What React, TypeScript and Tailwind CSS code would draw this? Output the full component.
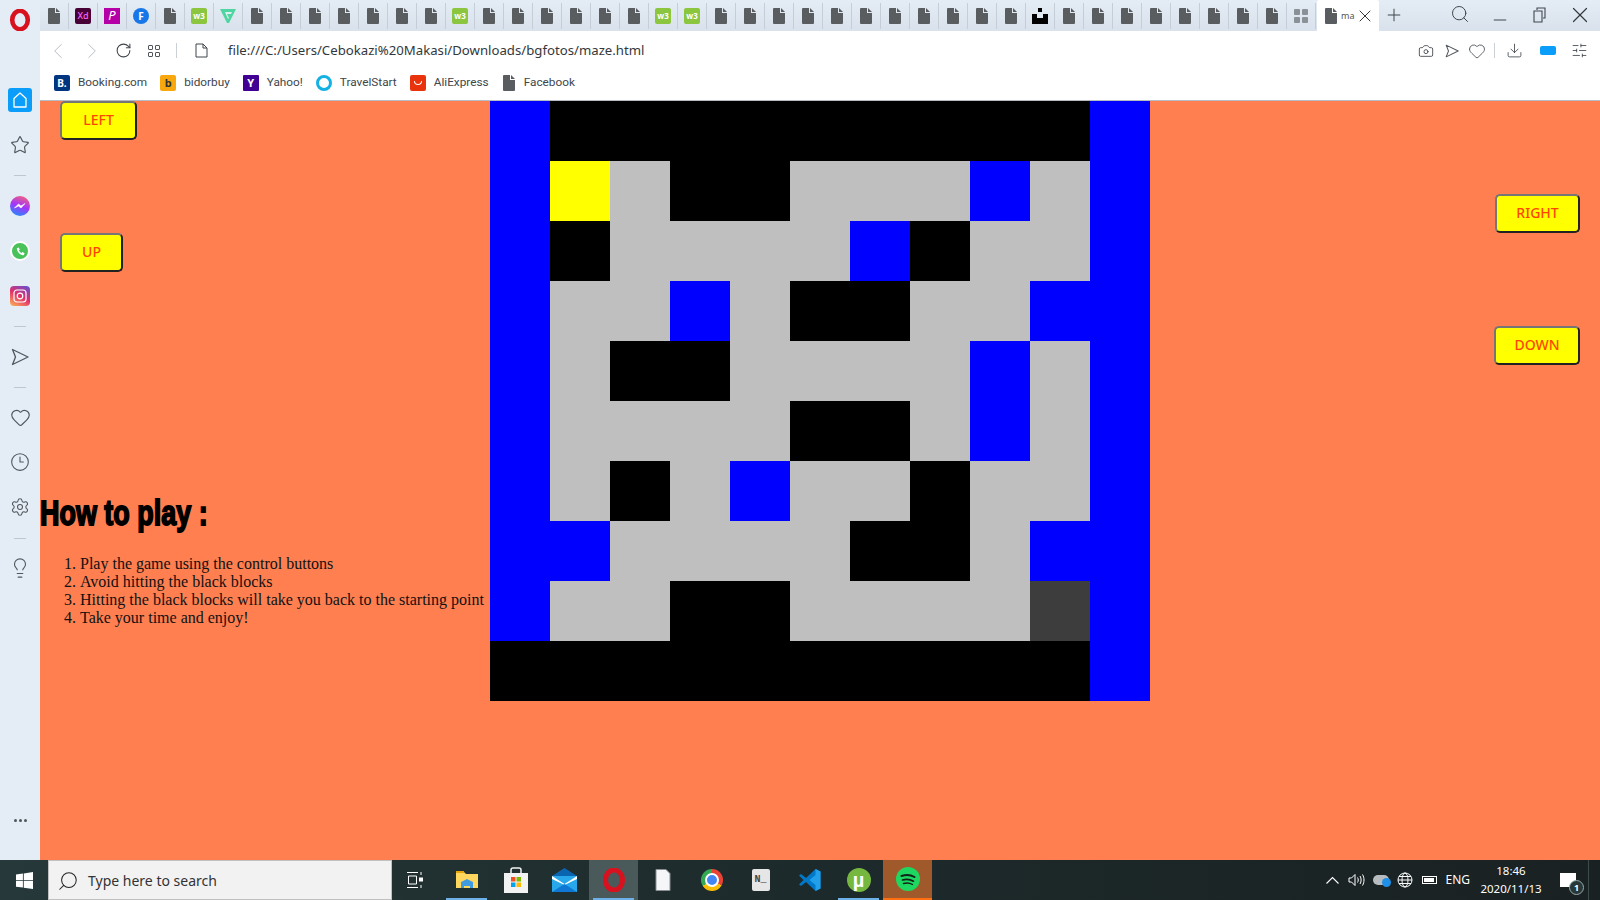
import { Camera, ChevronLeft, ChevronRight, Clock3, Download, Heart, Lightbulb, Minus, Plus, RotateCw, Search, Settings, SlidersHorizontal, Star, X } from "lucide-react";

const UI = "font-['Noto_Sans','Open_Sans',sans-serif]";
const SMALL = "font-['Roboto','Noto_Sans',sans-serif]";

const maze = [
  "BKKKKKKKKKB",
  "BYGKKGGGBGB",
  "BKGGGGBKGGB",
  "BGGBGKKGGBB",
  "BGKKGGGGBGB",
  "BGGGGKKGBGB",
  "BGKGBGGKGGB",
  "BBGGGGKKGBB",
  "BGGKKGGGGDB",
  "KKKKKKKKKKB",
];

const cellColors: Record<string, string> = {
  B: "bg-[#0000ff]",
  K: "bg-black",
  G: "bg-[#bfbfbf]",
  Y: "bg-[#ffff00]",
  D: "bg-[#3d3d3d]",
};

const tabs = [
  "file", "xd", "p", "f", "file", "w3", "v",
  "file", "file", "file", "file", "file", "file", "file",
  "w3",
  "file", "file", "file", "file", "file", "file",
  "w3", "w3",
  "file", "file", "file", "file", "file", "file", "file", "file", "file", "file", "file",
  "black",
  "file", "file", "file", "file", "file", "file", "file", "file",
  "grid",
];

const steps = [
  "Play the game using the control buttons",
  "Avoid hitting the black blocks",
  "Hitting the black blocks will take you back to the starting point",
  "Take your time and enjoy!",
];

function FileIcon({ className = "fill-[#5a5d60]" }: { className?: string }) {
  return (
    <svg width="14" height="16" viewBox="0 0 14 16" className={className}>
      <path d="M2 0h6v5h5v10a1 1 0 0 1-1 1H2a1 1 0 0 1-1-1V1a1 1 0 0 1 1-1z" />
      <path d="M9 0l4 4H9z" />
    </svg>
  );
}

function W3Icon() {
  return (
    <div className="flex h-4 w-4 items-center justify-center rounded-[2px] bg-[#8cc63f] text-[8px] font-bold leading-none text-white">
      w3
    </div>
  );
}

function TabIcon({ kind }: { kind: string }) {
  if (kind === "file") return <FileIcon />;
  if (kind === "w3") return <W3Icon />;
  if (kind === "xd")
    return (
      <div className="flex h-4 w-4 items-center justify-center rounded-[2px] bg-[#470137] text-[9px] font-medium leading-none text-[#ff61f6]">
        Xd
      </div>
    );
  if (kind === "p")
    return (
      <div className="flex h-4 w-4 items-center justify-center bg-[#b500a8] text-[13px] italic leading-none text-white">
        P
      </div>
    );
  if (kind === "f")
    return (
      <div className="flex h-4 w-4 items-center justify-center rounded-full bg-[#1877e8] text-[10px] font-bold leading-none text-white">
        F
      </div>
    );
  if (kind === "v")
    return (
      <svg width="16" height="16" viewBox="0 0 16 16">
        <path d="M0 1h16l-7 14h-2z" fill="#4fd6a0" />
        <path d="M5 4h7l-1 2H7l2 4-1 1z" fill="#e4ecf5" />
      </svg>
    );
  if (kind === "black")
    return (
      <svg width="16" height="16" viewBox="0 0 16 16">
        <path d="M6 0h4v4H6zM0 6h5v4h6V6h5v10H0z" fill="#000" />
      </svg>
    );
  return (
    <div className="grid h-[14px] w-[14px] grid-cols-2 gap-[2px]">
      <div className="rounded-[1px] bg-[#8a9298]" />
      <div className="rounded-[1px] bg-[#8a9298]" />
      <div className="rounded-[1px] bg-[#8a9298]" />
      <div className="rounded-[1px] bg-[#8a9298]" />
    </div>
  );
}

function OperaLogo({ size = 22 }: { size?: number }) {
  return (
    <svg width={size} height={size} viewBox="0 0 24 24">
      <ellipse cx="12" cy="12" rx="8.5" ry="10" fill="none" stroke="#d8111f" strokeWidth="5" />
    </svg>
  );
}

function SendIcon({ size = 18 }: { size?: number }) {
  return (
    <svg width={size} height={size} viewBox="0 0 18 18" fill="none" stroke="#50565c" strokeWidth="1.3" strokeLinejoin="round">
      <path d="M1.5 1.5L17 9 1.5 16.5 4.5 9z" />
    </svg>
  );
}

function SideDivider() {
  return <div className="h-px w-3 bg-[#bcc7d2]" />;
}

function Sidebar() {
  return (
    <aside className="flex h-[860px] w-10 shrink-0 flex-col items-center bg-[#e4ecf5]">
      <div className="mt-[9px]">
        <OperaLogo />
      </div>
      <div className="mt-[57px] flex h-6 w-6 items-center justify-center rounded-[3px] bg-[#0a9dfa]">
        <svg width="14" height="16" viewBox="0 0 14 16" fill="none" stroke="#fff" strokeWidth="1.3">
          <path d="M1 6.5L7 1l6 5.5V15H1z" strokeLinejoin="round" />
        </svg>
      </div>
      <Star size={20} strokeWidth={1.4} className="mt-[23px] text-[#50565c]" />
      <div className="mt-[20px]">
        <SideDivider />
      </div>
      <div className="relative mt-[20px] h-5 w-5 rounded-full bg-[linear-gradient(200deg,#ff6a68,#a334fa_50%,#0a9dfa)]">
        <svg width="20" height="20" viewBox="0 0 20 20" className="absolute inset-0">
          <path d="M4.5 12l4-4 2.5 2 4-2.5-4 4.5-2.5-2z" fill="#fff" stroke="#fff" strokeWidth="0.6" />
        </svg>
      </div>
      <div className="mt-[25px] flex h-5 w-5 items-center justify-center rounded-full border-2 border-white bg-[#49c25a]">
        <svg width="11" height="11" viewBox="0 0 12 12">
          <path d="M2 2.5L4 1.5l1.3 2.4-1 1c.6 1.2 1.5 2 2.8 2.7l1-1L10.5 8l-1 2C6 10.5 2 6.500 2 2.500z" fill="#fff" />
        </svg>
      </div>
      <div className="mt-[25px] flex h-5 w-5 items-center justify-center rounded-[4px] bg-[linear-gradient(30deg,#fdb755,#e1306c_50%,#5b51d8)]">
        <svg width="14" height="14" viewBox="0 0 14 14" fill="none" stroke="#fff" strokeWidth="1.2">
          <rect x="1" y="1" width="12" height="12" rx="3" />
          <circle cx="7" cy="7" r="2.8" />
        </svg>
      </div>
      <div className="mt-[20px]">
        <SideDivider />
      </div>
      <div className="mt-[21px]">
        <SendIcon />
      </div>
      <div className="mt-[21px]">
        <SideDivider />
      </div>
      <Heart size={21} strokeWidth={1.3} className="mt-[19px] text-[#50565c]" />
      <Clock3 size={20} strokeWidth={1.3} className="mt-[24px] text-[#50565c]" />
      <Settings size={20} strokeWidth={1.3} className="mt-[25px] text-[#50565c]" />
      <div className="mt-[21px]">
        <SideDivider />
      </div>
      <Lightbulb size={22} strokeWidth={1.2} className="mt-[18px] text-[#50565c]" />
      <div className="mt-auto mb-[38px] flex gap-[2px]">
        <div className="h-[3px] w-[3px] rounded-full bg-[#50565c]" />
        <div className="h-[3px] w-[3px] rounded-full bg-[#50565c]" />
        <div className="h-[3px] w-[3px] rounded-full bg-[#50565c]" />
      </div>
    </aside>
  );
}

function TabBar() {
  return (
    <div className="flex h-[31px] shrink-0 bg-[linear-gradient(#e4ecf5,#d9e2ec)]">
      <div className="flex">
        {tabs.map((kind, i) => (
          <div key={i} className="flex h-[31px] w-[29px] items-center justify-center">
            <div className="flex h-[26px] w-[28.500px] items-center justify-center border-r border-[#c5ced8]">
              <TabIcon kind={kind} />
            </div>
          </div>
        ))}
      </div>
      <div className="ml-[1px] flex h-[31px] w-[62px] items-center rounded-t-[2px] bg-white pl-[7px]">
        <FileIcon />
        <span className="ml-[3px] w-[14px] shrink-0 whitespace-nowrap text-[9px] leading-none text-[#555]">ma</span>
        <X size={20} strokeWidth={1.2} className="shrink-0 text-[#33383c]" />
      </div>
      <Plus size={20} strokeWidth={1.2} className="mt-[5px] ml-[5px] text-[#40464c]" />
      <Search size={20} strokeWidth={1.2} className="mt-[4px] ml-[46px] text-[#40464c]" />
      <Minus size={20} strokeWidth={1.2} className="mt-[10px] ml-[20px] text-[#40464c]" />
      <svg width="14" height="16" viewBox="0 0 14 16" fill="none" stroke="#40464c" strokeWidth="1.1" className="mt-[7px] ml-[23px]">
        <path d="M4 3V1h8v10h-2M1 4h8v11H1z" />
      </svg>
      <X size={26} strokeWidth={1.1} className="mt-[2px] ml-[20px] text-[#33383c]" />
    </div>
  );
}

function AddressBar() {
  return (
    <div className="flex h-[38px] shrink-0 items-center bg-white pt-[1px] text-[#40464c]">
      <ChevronLeft size={26} strokeWidth={0.9} className="ml-[5px] text-[#b5bcc3]" />
      <ChevronRight size={26} strokeWidth={0.9} className="ml-[8px] text-[#b5bcc3]" />
      <RotateCw size={17} strokeWidth={1.5} className="ml-[10px]" />
      <div className="ml-[16px] grid h-3 w-3 grid-cols-2 gap-[2px]">
        <div className="rounded-[1px] border border-[#50565c]" />
        <div className="rounded-[1px] border border-[#50565c]" />
        <div className="rounded-[1px] border border-[#50565c]" />
        <div className="rounded-[1px] border border-[#50565c]" />
      </div>
      <div className="ml-[16px] h-[15px] w-px bg-[#c9d0d6]" />
      <svg width="13" height="15" viewBox="0 0 13 15" fill="none" stroke="#40464c" strokeWidth="1" className="ml-[18px]">
        <path d="M1 1h7l4 4v9H1zM8 1v4h4" />
      </svg>
      <span className={`${UI} ml-[20px] text-[13.200px] leading-none text-[#33383c]`}>
        file:///C:/Users/Cebokazi%20Makasi/Downloads/bgfotos/maze.html
      </span>
      <div className="ml-auto flex items-center pr-[12px]">
        <Camera size={16} strokeWidth={1.3} />
        <div className="ml-[11px]">
          <SendIcon size={14} />
        </div>
        <Heart size={18} strokeWidth={1.1} className="ml-[9px]" />
        <div className="ml-[8px] h-[15px] w-px bg-[#c9d0d6]" />
        <Download size={17} strokeWidth={1.2} className="ml-[11px]" />
        <div className="ml-[17px] h-[9px] w-[16px] rounded-[2px] bg-[#0a9dfa]" />
        <SlidersHorizontal size={17} strokeWidth={1.2} className="ml-[15px]" />
      </div>
    </div>
  );
}

function Bookmark({ icon, label }: { icon: React.ReactNode; label: string }) {
  return (
    <div className="flex items-center gap-2">
      {icon}
      <span className={`${SMALL} text-[11.800px] leading-none text-[#40464c]`}>{label}</span>
    </div>
  );
}

function Bookmarks() {
  return (
    <div className="flex h-[32px] shrink-0 items-start gap-[13px] border-b border-[#b5bcc3] bg-white pl-[14px] pt-[6px]">
      <Bookmark
        label="Booking.com"
        icon={<div className="flex h-4 w-4 items-center justify-center rounded-[2px] bg-[#003580] text-[10px] font-bold text-white">B.</div>}
      />
      <Bookmark
        label="bidorbuy"
        icon={<div className="flex h-4 w-4 items-center justify-center rounded-[2px] bg-[#f9a70f] text-[11px] font-bold text-[#333]">b</div>}
      />
      <Bookmark
        label="Yahoo!"
        icon={<div className="flex h-4 w-4 items-center justify-center rounded-[1px] bg-[#410093] text-[11px] font-bold text-white">Y</div>}
      />
      <Bookmark label="TravelStart" icon={<div className="h-4 w-4 rounded-full border-[3px] border-[#14b2e2]" />} />
      <Bookmark
        label="AliExpress"
        icon={
          <div className="flex h-4 w-4 items-center justify-center rounded-[2px] bg-[#e8330c]">
            <div className="h-[4px] w-[8px] rounded-b-full border-x border-b border-white" />
          </div>
        }
      />
      <Bookmark label="Facebook" icon={<FileIcon />} />
    </div>
  );
}

function GameButton({ label, className }: { label: string; className: string }) {
  return (
    <button
      className={`flex items-center justify-center rounded-[5px] border-2 border-t-[#767676] border-l-[#767676] border-r-[#222] border-b-[#222] bg-[#ffff00] pb-[2px] text-[14px] font-medium text-[#ff4500] font-['Noto_Sans',sans-serif] ${className}`}
    >
      {label}
    </button>
  );
}

function GameArea() {
  return (
    <div className="flex min-h-0 flex-1 bg-[#ff7f50]">
      <div className="flex w-[450px] shrink-0 flex-col items-start">
        <GameButton label="LEFT" className="ml-5 h-[39px] w-[77px]" />
        <GameButton label="UP" className="ml-5 mt-[93px] h-[39px] w-[63px]" />
        <h1 className="mt-[221px] origin-left scale-x-[0.77] whitespace-nowrap font-['Liberation_Sans',sans-serif] text-[35px] font-bold leading-[40px] text-black [-webkit-text-stroke:1.8px_black]">
          How to play :
        </h1>
        <ol className="mt-[22px] list-decimal pl-10 font-['Liberation_Serif',serif] text-[16px] leading-[18px] text-[#111]">
          {steps.map((s) => (
            <li key={s} className="whitespace-nowrap">
              {s}
            </li>
          ))}
        </ol>
      </div>
      <div className="grid h-[600px] w-[660px] shrink-0 grid-cols-[repeat(11,60px)] grid-rows-[repeat(10,60px)]">
        {maze.flatMap((row, y) =>
          row.split("").map((c, x) => <div key={`${x}-${y}`} className={cellColors[c]} />)
        )}
      </div>
      <div className="flex flex-1 flex-col items-end">
        <GameButton label="RIGHT" className="mr-5 mt-[93px] h-[39px] w-[85px]" />
        <GameButton label="DOWN" className="mr-5 mt-[93px] h-[39px] w-[86px]" />
      </div>
    </div>
  );
}

function TaskCell({ children, active, running, className = "" }: { children: React.ReactNode; active?: boolean; running?: boolean; className?: string }) {
  return (
    <div className={`relative flex h-10 w-[49px] items-center justify-center ${active ? "bg-[#4a5a5a]" : ""} ${className}`}>
      {children}
      {running && <div className="absolute bottom-0 left-[4px] right-[4px] h-[2px] bg-[#6cb1e8]" />}
    </div>
  );
}

function Taskbar() {
  return (
    <div className="flex h-10 shrink-0 items-center bg-[linear-gradient(90deg,#263839,#1d2a2b_50%,#1a2122)] text-white">
      <div className="flex w-[48px] justify-center">
        <svg width="17" height="17" viewBox="0 0 16 16" fill="#fff">
          <path d="M0 2.300l6.500-.9v6.300H0zM7.300 1.300L16 0v7.700H7.300zM0 8.400h6.500v6.300L0 13.800zM7.300 8.400H16V16l-8.700-1.200z" />
        </svg>
      </div>
      <div className="flex h-10 w-[344px] items-center border border-[#c0c0c0] bg-[#f2f2f2] pl-[8px] pt-[1px]">
        <Search size={22} strokeWidth={1.1} className="-scale-x-100 text-[#222]" />
        <span className={`${UI} ml-[9px] text-[14px] leading-none text-[#333]`}>Type here to search</span>
      </div>
      <div className="mr-1 flex w-[46px] justify-center">
        <svg width="16" height="16" viewBox="0 0 16 16" fill="none" stroke="#fff" strokeWidth="1">
          <path d="M0 .5h11M0 15.500h11M1.500 4h8v8h-8zM14 0v3M14 13v3" />
          <rect x="12.500" y="6" width="3" height="3" fill="#fff" />
        </svg>
      </div>
      <TaskCell running>
        <svg width="22" height="20" viewBox="0 0 22 20">
          <path d="M0 2h8l2 2h12v14H0z" fill="#ffd75e" />
          <path d="M0 1h8v2H0z" fill="#e8a50c" />
          <path d="M5 12l6-3 6 3v6h-3v-2H8v2H5z" fill="#3f9ae0" />
        </svg>
      </TaskCell>
      <TaskCell>
        <svg width="24" height="26" viewBox="0 0 24 26">
          <path d="M7 6V3a2 2 0 0 1 2-2h6a2 2 0 0 1 2 2v3" fill="none" stroke="#f2f2f2" strokeWidth="1.500" />
          <path d="M0 6h24v20H0z" fill="#f2f2f2" />
          <path d="M7 10h4.500v4.500H7z" fill="#f25022" />
          <path d="M12.500 10H17v4.500h-4.500z" fill="#7fba00" />
          <path d="M7 15.500h4.500V20H7z" fill="#00a4ef" />
          <path d="M12.500 15.500H17V20h-4.500z" fill="#ffb900" />
        </svg>
      </TaskCell>
      <TaskCell>
        <svg width="25" height="24" viewBox="0 0 25 24">
          <path d="M0 8L12.500 0 25 8z" fill="#0a64b0" />
          <path d="M0 8h25v16H0z" fill="#28a8ea" />
          <path d="M0 8l12.500 8L25 8v3l-12.500 6L0 11z" fill="#fff" />
          <path d="M0 24l12.500-8L25 24z" fill="#0f78d4" />
        </svg>
      </TaskCell>
      <TaskCell active running>
        <OperaLogo size={24} />
      </TaskCell>
      <TaskCell>
        <svg width="16" height="22" viewBox="0 0 16 22">
          <path d="M1 .5h10l4 4v17H1z" fill="#f5f6f7" stroke="#8a8f93" />
        </svg>
      </TaskCell>
      <TaskCell>
        <div className="relative h-[22px] w-[22px] rounded-full bg-[conic-gradient(#ea4335_0_33%,#fbbc05_33%_66%,#34a853_66%_100%)]">
          <div className="absolute left-[6px] top-[6px] h-[10px] w-[10px] rounded-full border-2 border-white bg-[#4285f4] box-content -m-[2px]" />
        </div>
      </TaskCell>
      <TaskCell>
        <div className="flex h-[22px] w-[18px] items-center justify-center rounded-[2px] bg-[#e6e6e6] font-['Liberation_Mono',monospace] text-[10px] font-bold leading-none text-[#444]">
          N_
        </div>
      </TaskCell>
      <TaskCell>
        <svg width="24" height="24" viewBox="0 0 24 24">
          <path d="M17.500 1L8 10 3 6 1 7.500 5.500 12 1 16.500 3 18l5-4 9.500 9 5-2.500v-17z" fill="#0078c8" />
          <path d="M17.500 1l5 2.500v17l-5 2.500V7l-6 5 6 5" fill="#22a0ec" />
        </svg>
      </TaskCell>
      <TaskCell running>
        <div className="flex h-6 w-6 items-center justify-center rounded-full bg-[#76b83f] text-[20px] font-bold leading-none text-white font-['Liberation_Sans',sans-serif]">
          µ
        </div>
      </TaskCell>
      <TaskCell className="bg-[#a0592a] border-b-2 border-[#ff6f10]">
        <div className="flex h-6 w-6 items-center justify-center rounded-full bg-[#1ed760]">
          <svg width="16" height="13" viewBox="0 0 16 13" fill="none" stroke="#12221a" strokeLinecap="round">
            <path d="M1.500 3C6 1.500 11 2 14.500 4" strokeWidth="2" />
            <path d="M2.500 7c4-1 8-.5 11 1.200" strokeWidth="1.700" />
            <path d="M3.500 10.500c3-.7 6.500-.5 9 1" strokeWidth="1.400" />
          </svg>
        </div>
      </TaskCell>
      <div className="ml-auto flex items-center pr-[11px]">
        <svg width="13" height="8" viewBox="0 0 13 8" fill="none" stroke="#fff" strokeWidth="1.100">
          <path d="M.5 7.500L6.500 1.500l6 6" />
        </svg>
        <svg width="17" height="14" viewBox="0 0 17 14" fill="none" stroke="#fff" strokeWidth="1" className="ml-[9px]">
          <path d="M1 5h2.500L7 1.500v11L3.500 9H1zM9.500 4.500c1 1.500 1 3.500 0 5M12 3c1.500 2.500 1.500 5.500 0 8M14.500 1.500c2 3.500 2 7.500 0 11" />
        </svg>
        <div className="relative ml-[8px] h-[10px] w-[16px] rounded-full bg-[#b6bcbf]">
          <div className="absolute -bottom-[2px] -right-[2px] h-[9px] w-[9px] rounded-full bg-[#1f8fe8]" />
        </div>
        <svg width="16" height="16" viewBox="0 0 16 16" fill="none" stroke="#fff" strokeWidth="1" className="ml-[8px]">
          <circle cx="8" cy="8" r="7" />
          <ellipse cx="8" cy="8" rx="3" ry="7" />
          <path d="M1 8h14M2 4.500h12M2 11.500h12" />
        </svg>
        <div className="ml-[9px] flex h-[8px] w-[15px] items-center border border-white p-[1px]">
          <div className="h-full w-[10px] bg-white" />
        </div>
        <span className={`${UI} ml-[8px] text-[12px] leading-none text-white`}>ENG</span>
        <div className={`${UI} ml-[11px] flex w-[60px] flex-col items-center text-[11.500px] leading-[18px] text-white`}>
          <span>18:46</span>
          <span>2020/11/13</span>
        </div>
        <div className="relative ml-[19px] h-[14px] w-4 bg-white">
          <div className="absolute -bottom-[8px] -right-[8px] flex h-[15px] w-[15px] items-center justify-center rounded-full border border-[#9aa] bg-[#263839] text-[9px] font-bold leading-none text-white">
            1
          </div>
        </div>
        <div className="ml-[12px] h-10 w-px bg-[#3c4a4b]" />
      </div>
    </div>
  );
}

export default function App() {
  return (
    <div className="flex h-[900px] w-[1600px] flex-col overflow-hidden">
      <div className="flex min-h-0 flex-1">
        <Sidebar />
        <main className="flex min-w-0 flex-1 flex-col">
          <TabBar />
          <AddressBar />
          <Bookmarks />
          <GameArea />
        </main>
      </div>
      <Taskbar />
    </div>
  );
}
